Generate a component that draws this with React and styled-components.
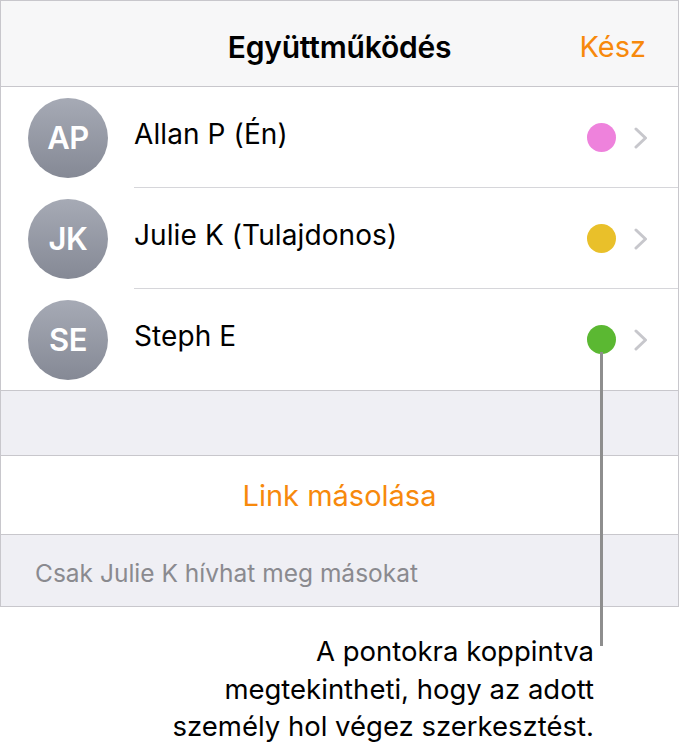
import React from 'react'
import styled, { createGlobalStyle } from 'styled-components'

const GlobalStyle = createGlobalStyle`
    html, body {
        margin:0;
        padding:0;
        background:white;
        font-family:Inter, "Noto Sans", sans-serif;
        -webkit-font-smoothing:antialiased;
    }
`

const people = [
    { initials: 'AP', name: 'Allan P (Én)', color: '#ee82dc' },
    { initials: 'JK', name: 'Julie K (Tulajdonos)', color: '#e9c02a' },
    { initials: 'SE', name: 'Steph E', color: '#5bb832', pointer: true },
]

function App() {
    return (
        <Page>
            <GlobalStyle />
            <Panel>
                <Header>
                    <Title>Együttműködés</Title>
                    <Done>Kész</Done>
                </Header>
                <List>
                    {people.map((p, i) => (
                        <Row key={p.initials} last={i === people.length - 1}>
                            <Avatar>{p.initials}</Avatar>
                            <Name>{p.name}</Name>
                            <Dot color={p.color}>
                                {p.pointer && <Pointer />}
                            </Dot>
                            <Chevron viewBox="0 0 14 22">
                                <path d="M2 2 L11.5 11 L2 20" fill="none" stroke="#c7c7cc" strokeWidth="3" strokeLinecap="round" strokeLinejoin="round" />
                            </Chevron>
                        </Row>
                    ))}
                </List>
                <Spacer />
                <LinkRow>Link másolása</LinkRow>
                <Footer>Csak Julie K hívhat meg másokat</Footer>
            </Panel>
            <Callout>
                A pontokra koppintva<br />
                megtekintheti, hogy az adott<br />
                személy hol végez szerkesztést.
            </Callout>
        </Page>
    )
}

export default App

const Page = styled.div`
    width:681px;
    height:742px;
    position:relative;
    overflow:hidden;
`

const Panel = styled.div`
    width:677px;
    border:1px solid #c8c7cc;
    display:flex;
    flex-direction:column;
`

const Header = styled.div`
    height:86px;
    box-sizing:border-box;
    padding-top:6px;
    background:#f7f7f8;
    border-bottom:1px solid #c8c7cc;
    display:flex;
    align-items:center;
    justify-content:center;
    position:relative;
`

const Title = styled.span`
    font-size:30px;
    font-weight:600;
    color:#000;
    letter-spacing:-0.2px;
`

const Done = styled.span`
    position:absolute;
    right:32px;
    top:50%;
    transform:translateY(-42%);
    font-size:29px;
    color:#f7890c;
`

const List = styled.div`
    background:white;
    border-bottom:1px solid #c8c7cc;
`

const Row = styled.div`
    height:101px;
    display:flex;
    align-items:center;
    padding-left:27px;
    position:relative;
    &:after {
        content:'';
        display:${p => p.last ? 'none' : 'block'};
        position:absolute;
        left:133px;
        right:0;
        bottom:0;
        height:1px;
        background:#d6d6da;
    }
`

const Avatar = styled.div`
    width:80px;
    height:80px;
    border-radius:50%;
    background:linear-gradient(#a6aab5, #858995);
    color:white;
    font-size:31px;
    font-weight:600;
    display:flex;
    align-items:center;
    justify-content:center;
    letter-spacing:-0.5px;
`

const Name = styled.span`
    flex:1;
    margin-left:26px;
    margin-bottom:8px;
    font-size:28px;
    color:#000;
    letter-spacing:0.1px;
`

const Dot = styled.div`
    width:29px;
    height:29px;
    border-radius:50%;
    background:${p => p.color};
    position:relative;
    margin-right:18px;
`

const Pointer = styled.div`
    position:absolute;
    left:13px;
    top:27px;
    width:3px;
    height:294px;
    background:#8e8e8e;
`

const Chevron = styled.svg`
    width:14px;
    height:22px;
    margin-right:30px;
`

const Spacer = styled.div`
    height:64px;
    background:#efeff4;
    border-bottom:1px solid #c8c7cc;
`

const LinkRow = styled.div`
    height:78px;
    background:white;
    border-bottom:1px solid #c8c7cc;
    display:flex;
    align-items:center;
    justify-content:center;
    font-size:29px;
    color:#f7890c;
`

const Footer = styled.div`
    height:71px;
    background:#efeff4;
    padding:23px 0 0 34px;
    box-sizing:border-box;
    font-size:24.5px;
    color:#8a8a8f;
`

const Callout = styled.div`
    width:594px;
    margin-top:26px;
    text-align:right;
    font-size:27.5px;
    line-height:37.5px;
    color:#000;
`
